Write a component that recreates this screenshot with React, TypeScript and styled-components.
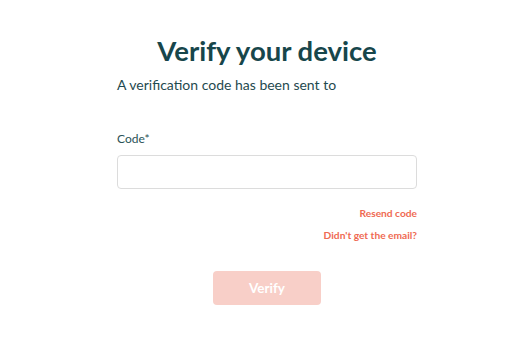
import styled, { createGlobalStyle } from "styled-components";

const GlobalStyle = createGlobalStyle`
  html, body {
    margin: 0;
    padding: 0;
    background: #ffffff;
    font-family: "Lato", "Noto Sans", sans-serif;
  }
`;

const Page = styled.div`
  width: 532px;
  height: 357px;
  display: flex;
  justify-content: center;
  box-sizing: border-box;
  padding: 35px 0 0 2px;
`;

const Card = styled.div`
  width: 300px;
  display: flex;
  flex-direction: column;
`;

const Title = styled.h1`
  margin: 0;
  text-align: center;
  font-size: 27.5px;
  line-height: 32px;
  font-weight: 700;
  color: #17464b;
`;

const Subtitle = styled.p`
  margin: 9px 0 0;
  font-size: 14px;
  line-height: 18px;
  color: #1f4a4f;
`;

const Label = styled.label`
  margin-top: 37px;
  font-size: 12px;
  line-height: 16px;
  color: #2a5257;
`;

const Input = styled.input`
  margin-top: 8px;
  height: 34px;
  box-sizing: border-box;
  border: 1px solid #dcdcdc;
  border-radius: 4px;
  padding: 0 10px;
  font-family: inherit;
  font-size: 13px;
  outline: none;
`;

const Links = styled.div`
  margin-top: 18px;
  display: flex;
  flex-direction: column;
  align-items: flex-end;
  gap: 9px;
`;

const LinkText = styled.a`
  font-size: 10.2px;
  line-height: 13px;
  font-weight: 700;
  color: #ef6a52;
  text-decoration: none;
  cursor: pointer;
`;

const Actions = styled.div`
  margin-top: 29px;
  display: flex;
  justify-content: center;
`;

const Button = styled.button<{ disabled?: boolean }>`
  width: 108px;
  height: 34px;
  padding: 0;
  border: none;
  border-radius: 4px;
  background: ${({ disabled }) => (disabled ? "#f8cfc8" : "#ef6a52")};
  color: #ffffff;
  font-family: inherit;
  font-size: 13.5px;
  font-weight: 700;
`;

export default function App() {
  return (
    <>
      <GlobalStyle />
      <Page>
        <Card>
          <Title>Verify your device</Title>
          <Subtitle>A verification code has been sent to</Subtitle>
          <Label htmlFor="code">Code*</Label>
          <Input id="code" type="text" />
          <Links>
            <LinkText>Resend code</LinkText>
            <LinkText>Didn't get the email?</LinkText>
          </Links>
          <Actions>
            <Button disabled>Verify</Button>
          </Actions>
        </Card>
      </Page>
    </>
  );
}
